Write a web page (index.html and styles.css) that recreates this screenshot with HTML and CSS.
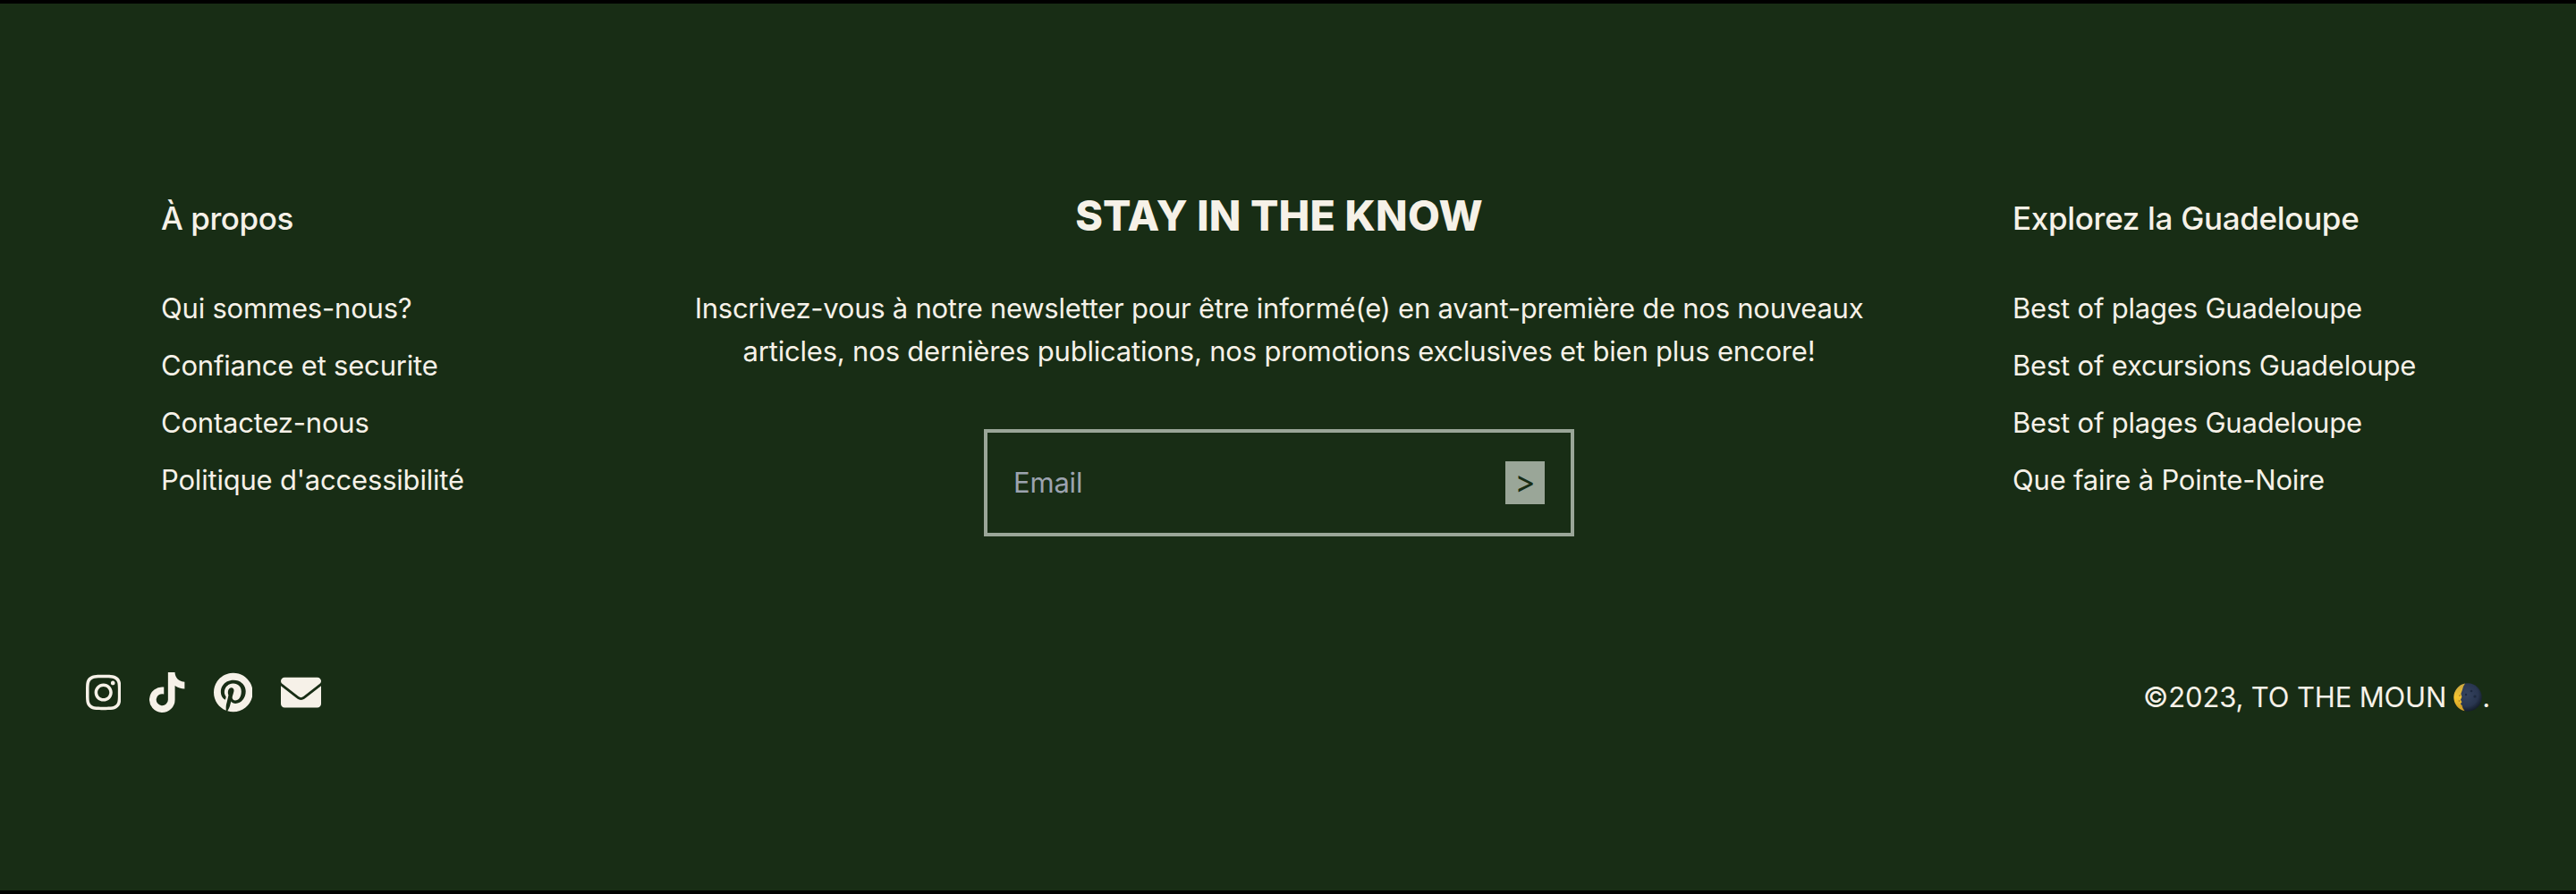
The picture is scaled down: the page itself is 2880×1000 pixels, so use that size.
FILE: index.html
```html
<!DOCTYPE html>
<html lang="fr">
<head>
<meta charset="utf-8">
<title>To the Moun</title>
<link rel="stylesheet" href="styles.css">
</head>
<body>
<footer class="footer">
  <div class="columns">
    <nav class="links">
      <h3 class="links-title title-about">À propos</h3>
      <ul class="links-list">
        <li><a>Qui sommes-nous?</a></li>
        <li><a>Confiance et securite</a></li>
        <li><a>Contactez-nous</a></li>
        <li><a>Politique d'accessibilité</a></li>
      </ul>
    </nav>
    <section class="newsletter">
      <h2 class="newsletter-title">STAY IN THE KNOW</h2>
      <p class="newsletter-text"><span class="line-first">Inscrivez-vous à notre newsletter pour être informé(e) en avant-première de nos nouveaux</span><br>articles, nos dernières publications, nos promotions exclusives et bien plus encore!</p>
      <form class="signup">
        <input class="signup-input" type="email" placeholder="Email">
        <button class="signup-button" type="button">&gt;</button>
      </form>
    </section>
    <nav class="links">
      <h3 class="links-title">Explorez la Guadeloupe</h3>
      <ul class="links-list">
        <li><a>Best of plages Guadeloupe</a></li>
        <li><a>Best of excursions Guadeloupe</a></li>
        <li><a>Best of plages Guadeloupe</a></li>
        <li><a>Que faire à Pointe-Noire</a></li>
      </ul>
    </nav>
  </div>
  <div class="bottom">
    <div class="socials">
      <svg class="icon" viewBox="0 0 448 512"><path d="M224.1 141c-63.6 0-114.900 51.300-114.900 114.900s51.300 114.900 114.900 114.900S339 319.500 339 255.900 287.700 141 224.100 141zm0 189.600c-41.100 0-74.700-33.500-74.700-74.700s33.500-74.700 74.700-74.700 74.700 33.500 74.700 74.700-33.600 74.700-74.700 74.700zm146.400-194.300c0 14.900-12 26.800-26.800 26.800-14.900 0-26.800-12-26.800-26.800s12-26.800 26.800-26.800 26.800 12 26.800 26.800zm76.100 27.200c-1.700-35.900-9.900-67.700-36.200-93.900-26.200-26.200-58-34.400-93.900-36.200-37-2.100-147.900-2.100-184.900 0-35.800 1.700-67.600 9.900-93.900 36.100s-34.400 58-36.200 93.900c-2.100 37-2.100 147.900 0 184.900 1.700 35.900 9.900 67.700 36.200 93.900s58 34.400 93.900 36.200c37 2.100 147.900 2.100 184.900 0 35.900-1.700 67.700-9.900 93.900-36.200 26.200-26.200 34.400-58 36.200-93.900 2.100-37 2.100-147.800 0-184.800zM398.800 388c-7.800 19.600-22.900 34.700-42.600 42.600-29.500 11.700-99.500 9-132.100 9s-102.700 2.600-132.100-9c-19.600-7.800-34.700-22.900-42.600-42.600-11.700-29.500-9-99.500-9-132.100s-2.600-102.700 9-132.100c7.800-19.600 22.900-34.700 42.600-42.600 29.500-11.700 99.500-9 132.100-9s102.700-2.600 132.100 9c19.600 7.800 34.700 22.900 42.600 42.600 11.700 29.500 9 99.500 9 132.100s2.700 102.700-9 132.100z"/></svg>
      <svg class="icon" viewBox="0 0 448 512"><path d="M448 209.900a210.100 210.100 0 0 1-122.800-39.300v178.800A162.600 162.600 0 1 1 185 188.300v89.900a74.600 74.600 0 1 0 52.200 71.200V0h88a121.200 121.200 0 0 0 1.900 22.200 122.200 122.200 0 0 0 53.900 80.200 121.400 121.400 0 0 0 67 20.100z"/></svg>
      <svg class="icon" viewBox="0 0 496 512"><path d="M496 256c0 137-111 248-248 248-25.600 0-50.200-3.900-73.400-11.100 10.100-16.500 25.200-43.500 30.800-65 3-11.600 15.400-59 15.400-59 8.100 15.400 31.700 28.500 56.800 28.500 74.800 0 128.700-68.800 128.700-154.300 0-81.900-66.900-143.200-152.900-143.200-107 0-163.900 71.800-163.900 150.100 0 36.400 19.400 81.700 50.300 96.100 4.700 2.200 7.200 1.200 8.300-3.300.8-3.400 5-20.300 6.900-28.100.6-2.500.3-4.700-1.700-7.100-10.100-12.500-18.300-35.300-18.300-56.600 0-54.700 41.400-107.600 112-107.600 60.900 0 103.600 41.500 103.600 100.900 0 67.100-33.900 113.600-78 113.600-24.300 0-42.600-20.100-36.700-44.800 7-29.500 20.500-61.300 20.500-82.600 0-19-10.200-34.900-31.400-34.900-24.900 0-44.900 25.700-44.900 60.200 0 22 7.400 36.800 7.400 36.800s-24.500 103.800-29 123.200c-5 21.400-3 51.600-.9 71.200C65.400 450.900 0 361.100 0 256 0 119 111 8 248 8s248 111 248 248z"/></svg>
      <svg class="icon" viewBox="0 0 512 512"><path d="M256 352c-16.500 0-33.100-5.100-47.200-15.400L0 173.400V400c0 26.500 21.500 48 48 48h416c26.500 0 48-21.500 48-48V173.400L303.200 336.600C289.100 346.900 272.500 352 256 352zM16.300 145.300 228.300 311.400c16.300 11.900 39.100 11.900 55.400 0l212-166.100C505.900 137.200 512 125 512 112c0-26.500-21.500-48-48-48H48C21.500 64 0 85.500 0 112c0 13 6.100 25.200 16.300 33.300z"/></svg>
    </div>
    <p class="copyright"><span>©2023, TO THE MOUN</span>
      <svg class="moon" viewBox="0 0 32 32">
        <defs>
          <radialGradient id="shade" cx=".45" cy=".4" r=".6"><stop offset="0" stop-color="#35435f"/><stop offset=".7" stop-color="#293650"/><stop offset="1" stop-color="#151e2c"/></radialGradient>
          <linearGradient id="glow" x1="0" y1="0" x2="0" y2="1"><stop offset="0" stop-color="#c9a640"/><stop offset=".5" stop-color="#f5c52f"/><stop offset="1" stop-color="#cf9a24"/></linearGradient>
        </defs>
        <circle cx="16" cy="16" r="15.700" fill="url(#shade)"/>
        <path d="M13 .6A15.700 15.700 0 0 0 12.500 31.300Q9.800 28 9.500 25L7.800 23.500l1.600-2.300-1.400-2.500 1.400-3.200L8.300 12l1.500-4Q10.800 3.500 13 .6z" fill="url(#glow)"/>
        <g fill="#b78a2c"><circle cx="7" cy="14" r="1"/><circle cx="6.500" cy="20" r=".9"/><circle cx="8.700" cy="26" r=".8"/></g>
        <g fill="#1d293f"><circle cx="20" cy="9" r="1.300"/><circle cx="24" cy="15" r="1.600"/><circle cx="14" cy="13" r="1.200"/></g>
      </svg><span>.</span></p>
  </div>
</footer>
</body>
</html>
```
FILE: styles.css
```css
* { box-sizing: border-box; margin: 0; padding: 0; }
body { background: #000; }

.footer {
  height: 1000px;
  padding-top: 205px;
  border-top: 4px solid #000;
  border-bottom: 4px solid #000;
  background: #182d15;
  color: #f6f1e8;
  font: 400 31px/48px Inter, "Liberation Sans", sans-serif;
  letter-spacing: -.2px;
}

.columns {
  display: grid;
  grid-template-columns: 430px 1fr 450px;
  height: 391px;
  padding: 0 180px;
}

.links { padding-top: 7px; white-space: nowrap; }
.links-title { font-size: 35px; font-weight: 500; line-height: 56px; letter-spacing: -.32px; }
.title-about { letter-spacing: -.45px; }
.links-list { margin-top: 41px; list-style: none; line-height: 64px; }

.newsletter { display: flex; flex-direction: column; align-items: center; text-align: center; }
.newsletter-title { font-size: 46.5px; font-weight: 800; line-height: 64px; letter-spacing: .2px; }
.newsletter-text { margin-top: 48px; white-space: nowrap; }
.line-first { letter-spacing: -.255px; }

.signup {
  display: flex;
  align-items: center;
  justify-content: space-between;
  width: 660px;
  height: 120px;
  margin-top: 63px;
  padding: 0 29px;
  border: 4px solid #9aa698;
}
.signup-input { flex: 1; min-width: 0; border: 0; outline: 0; background: none; color: inherit; font: inherit; letter-spacing: inherit; }
.signup-input::placeholder { color: #9ca3af; opacity: 1; }
.signup-button { width: 44px; height: 48px; border: 0; background: #9aa698; color: #182d15; font: inherit; font-size: 35px; line-height: 44px; padding-bottom: 4px; }

.bottom { display: flex; justify-content: space-between; align-items: flex-start; padding: 152px 96px 0; }
.socials { display: flex; gap: 32px; }
.icon { height: 45px; fill: currentColor; }
.copyright { display: flex; align-items: center; padding-top: 4px; letter-spacing: -.15px; }
.moon { width: 32px; height: 32px; margin-left: 8px; }
```
